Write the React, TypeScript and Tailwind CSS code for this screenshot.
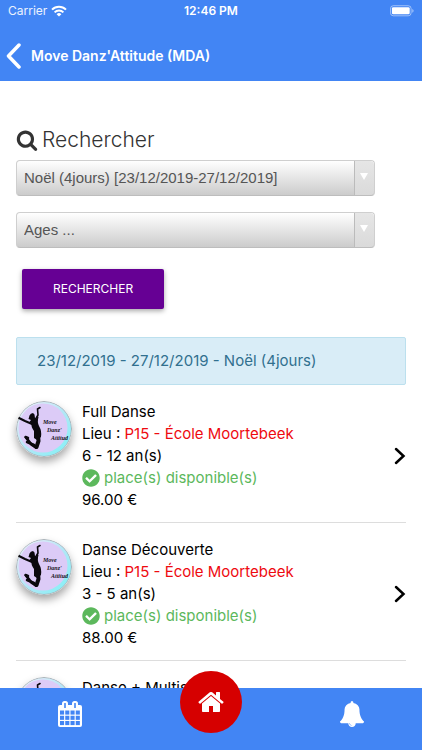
import React from "react";
import { FaCheckCircle } from "react-icons/fa";

const courses = [
    { name: "Full Danse", place: "P15 - École Moortebeek", ages: "6 - 12 an(s)", price: "96.00 €" },
    { name: "Danse Découverte", place: "P15 - École Moortebeek", ages: "3 - 5 an(s)", price: "88.00 €" },
    { name: "Danse + Multisports", place: "P15 - École Moortebeek", ages: "6 - 12 an(s)", price: "96.00 €" },
];

const icons = {
    search: "M1216 832q0-185-131.5-316.5t-316.5-131.5-316.5 131.5-131.5 316.5 131.5 316.5 316.5 131.5 316.5-131.5 131.5-316.5zm512 832q0 52-38 90t-90 38q-54 0-90-38l-343-342q-179 124-399 124-143 0-273.5-55.5t-225-150-150-225-55.5-273.5 55.5-273.5 150-225 225-150 273.5-55.5 273.5 55.5 225 150 150 225 55.5 273.5q0 220-124 399l343 343q37 37 37 90z",
    home: "M1472 992v480q0 26-19 45t-45 19h-384v-384h-256v384h-384q-26 0-45-19t-19-45v-480q0-1 .5-3t.5-3l575-474 575 474q1 2 1 6zm223-69l-62 74q-8 9-21 11h-3q-13 0-21-7l-692-577-692 577q-12 8-24 7-13-2-21-11l-62-74q-8-10-7-23.5t11-21.5l719-599q32-26 76-26t76 26l244 204v-195q0-14 9-23t23-9h192q14 0 23 9t9 23v408l219 182q10 8 11 21.5t-7 23.5z",
    bell: "M912 1696q0-16-16-16-59 0-101.5-42.5t-42.5-101.5q0-16-16-16t-16 16q0 73 51.5 124.5t124.5 51.5q16 0 16-16zm816-288q0 52-38 90t-90 38h-448q0 106-75 181t-181 75-181-75-75-181h-448q-52 0-90-38t-38-90q50-42 91-88t85-119.5 74.5-158.5 50-206 19.5-260q0-152 117-282.5t307-158.5q-8-19-8-39 0-40 28-68t68-28 68 28 28 68q0 20-8 39 190 28 307 158.5t117 282.5q0 139 19.5 260t50 206 74.5 158.5 85 119.5 91 88z",
};

const Icon = ({ path, className }: { path: string; className: string }) => (
    <svg viewBox="0 0 1792 1792" fill="currentColor" aria-hidden="true" className={className}>
        <path d={path} />
    </svg>
);

const CalendarIcon = () => (
    <svg viewBox="0 0 24 26" aria-hidden="true" className="h-[26px] w-6 text-white">
        <path fill="currentColor" d="M2 4h20a2 2 0 0 1 2 2v18a2 2 0 0 1-2 2H2a2 2 0 0 1-2-2V6a2 2 0 0 1 2-2z" />
        <rect x="4" y="0" width="6" height="8" rx="2.5" fill="currentColor" />
        <rect x="14" y="0" width="6" height="8" rx="2.5" fill="currentColor" />
        <g fill="#4285f4">
            <rect x="6.2" y="2" width="1.6" height="5" rx="0.5" />
            <rect x="16.2" y="2" width="1.6" height="5" rx="0.5" />
            {[2, 7.25, 12.5, 17.75].map((x) =>
                [9.5, 14.75, 20].map((y) => <rect key={`${x}-${y}`} x={x} y={y} width="4.1" height="4.1" />)
            )}
        </g>
    </svg>
);

const StatusBar = () => (
    <div className="grid h-[22px] grid-cols-3 items-center px-2 text-xs text-white">
        <span className="flex items-center gap-1 text-white/90">
            Carrier
            <svg viewBox="0 0 16 12" aria-hidden="true" className="h-3 w-4">
                <g fill="none" stroke="white" strokeWidth="2">
                    <path d="M1 4.6a10 10 0 0 1 14 0" />
                    <path d="M3.6 7.4a6.2 6.2 0 0 1 8.8 0" />
                </g>
                <path fill="white" d="M8 11.6 5.6 9.2a3.4 3.4 0 0 1 4.8 0z" />
            </svg>
        </span>
        <span className="text-center font-semibold">12:46 PM</span>
        <svg viewBox="0 0 25 12" aria-hidden="true" className="h-3 w-6 justify-self-end">
            <rect x="0.5" y="0.5" width="21.5" height="10.5" rx="3" fill="none" stroke="white" strokeOpacity="0.5" />
            <rect x="2" y="2" width="18.5" height="7.5" rx="1.5" fill="white" />
            <path fill="white" fillOpacity="0.5" d="M23.2 3.8q1.4.6 1.4 2t-1.4 2z" />
        </svg>
    </div>
);

const Select = ({ label, value }: { label: string; value: string }) => (
    <div className="relative h-9 w-[92%]">
        <select
            aria-label={label}
            className="size-full appearance-none rounded border border-[#cfcfcf] border-b-[#bdbdbd] bg-linear-to-b from-white to-[#cccccc] pr-6 pl-[7px] font-['Liberation_Sans',sans-serif] text-[15px] text-[#555]"
        >
            <option>{value}</option>
        </select>
        <span className="pointer-events-none absolute inset-y-px right-px flex w-5 items-center justify-center rounded-r border-l border-[#bbb] bg-linear-to-b from-[#e6e6e6] to-[#dadada]">
            <svg viewBox="0 0 8 7" aria-hidden="true" className="mb-1 h-[7px] w-2">
                <path d="M0 0h8L4 7z" fill="white" />
            </svg>
        </span>
    </div>
);

const Logo = () => (
    <svg viewBox="0 0 56 56" aria-hidden="true" className="size-14 shrink-0 rounded-full shadow-[0_5px_9px_rgba(0,0,0,0.35)]">
        <defs>
            <linearGradient id="ring" x1="0" y1="0" x2="1" y2="1">
                <stop offset="0" stopColor="#f4f2fb" />
                <stop offset="0.5" stopColor="#b5e6f6" />
                <stop offset="1" stopColor="#7df3f6" />
            </linearGradient>
        </defs>
        <circle cx="28" cy="28" r="27.5" fill="url(#ring)" stroke="#a9b1b7" />
        <circle cx="27" cy="27" r="24.5" fill="#dccbf7" />
        <g fill="none" stroke="#0b090d" strokeLinecap="round" strokeLinejoin="round">
            <path strokeWidth="1.6" d="M18.5 20 22 14 21.5 8 24 6.5" />
            <path strokeWidth="2" d="M16 23 9 20 3 17" />
            <path strokeWidth="4" d="M22 33 22.5 40 20.5 46" />
            <path strokeWidth="2.8" d="M20 46.5 15 43 10 36.5" />
            <path strokeWidth="2.5" d="m18 44-7-3M12 37l-2.5-1" />
        </g>
        <path fill="#0b090d" d="M13.5 14.5q1-2.5 3.5-2.5l1.5 1.5.5 3.5 1.5 1 1-3 1 1q-1.5 5 .5 9 3 5 2 11l-4 3-3-2 0-7q-3-4-2.5-7l-2-2 1.5-2-2.5-1z" />
        <g fill="#17131d" className="font-['Liberation_Serif',serif] text-[6px] font-bold italic">
            <text x="27" y="23">Move</text>
            <text x="31" y="31">Danz'</text>
            <text x="35" y="39">Attitud</text>
        </g>
    </svg>
);

const App = () => {
    return (
        <div className="flex h-screen flex-col bg-white font-['Inter',sans-serif] text-black">
            <header className="shrink-0 bg-[#4285f4] pb-1">
                <StatusBar />
                <div className="flex h-[55px] items-center gap-[10px] px-[6px] pt-3 text-white">
                    <button aria-label="Retour">
                        <svg viewBox="0 0 15 26" aria-hidden="true" className="h-[26px] w-[15px]">
                            <path d="M13 2 2.5 13 13 24" fill="none" stroke="white" strokeWidth="3.5" strokeLinecap="round" strokeLinejoin="round" />
                        </svg>
                    </button>
                    <h1 className="text-sm font-semibold">Move Danz'Attitude (MDA)</h1>
                </div>
            </header>

            <main className="min-h-0 flex-1 overflow-y-auto px-4 pt-[43px] [scrollbar-width:none]">
                <form>
                    <h2 className="flex items-center gap-1 text-[21px] leading-8 font-light text-[#333]">
                        <Icon path={icons.search} className="h-6 w-[22px]" />
                        Rechercher
                    </h2>
                    <div className="mt-1 flex flex-col gap-4">
                        <Select label="Période" value="Noël (4jours) [23/12/2019-27/12/2019]" />
                        <Select label="Ages" value="Ages ..." />
                    </div>
                    <button
                        type="button"
                        className="mt-[21px] ml-[6px] block h-10 rounded-xs bg-[#660094] px-[31px] text-xs text-white shadow-[0_2px_5px_rgba(0,0,0,0.35)]"
                    >
                        RECHERCHER
                    </button>
                </form>

                <h3 className="mt-7 rounded-xs border border-[#bce0ee] bg-[#d9edf7] px-5 py-[11px] text-[15px] leading-6 text-[#31708f]">
                    23/12/2019 - 27/12/2019 - Noël (4jours)
                </h3>

                <ul>
                    {courses.map((course) => (
                        <li key={course.name} className="border-b border-[#ddd]">
                            <a href="#" className="flex gap-[10px] pt-4 pb-[11px]">
                                <Logo />
                                <div className="flex-1 text-[15px] leading-[22px]">
                                    <p>{course.name}</p>
                                    <p>
                                        Lieu : <span className="text-[#ee0a10]">{course.place}</span>
                                    </p>
                                    <p>{course.ages}</p>
                                    <p className="flex items-center gap-1 text-[#5cb85c]">
                                        <FaCheckCircle className="size-[18px]" />
                                        place(s) disponible(s)
                                    </p>
                                    <p>{course.price}</p>
                                </div>
                                <svg viewBox="0 0 12 18" aria-hidden="true" className="h-[18px] w-3 self-center">
                                    <path d="m2 2 7.5 7L2 16" fill="none" stroke="black" strokeWidth="2.5" strokeLinecap="round" strokeLinejoin="miter" />
                                </svg>
                            </a>
                        </li>
                    ))}
                </ul>
            </main>

            <nav className="z-10 grid h-[62px] shrink-0 grid-cols-3 items-center justify-items-center bg-[#4285f4] pb-[10px] text-white">
                <a href="#" aria-label="Calendrier">
                    <CalendarIcon />
                </a>
                <a href="#" aria-label="Accueil" className="-mt-[17px] flex size-[62px] items-center justify-center self-start rounded-full bg-[#d60000]">
                    <Icon path={icons.home} className="size-7" />
                </a>
                <a href="#" aria-label="Notifications">
                    <Icon path={icons.bell} className="size-[26px]" />
                </a>
            </nav>
        </div>
    );
};

export default App;
